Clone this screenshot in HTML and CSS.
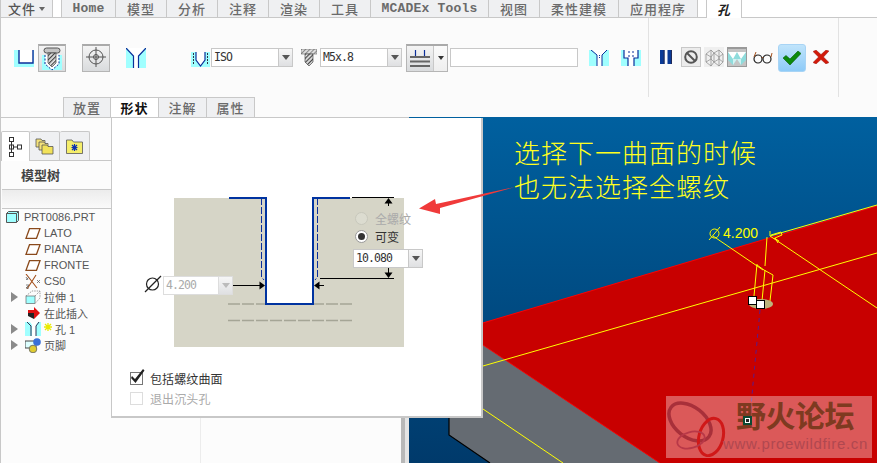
FILE: index.html
```html
<!DOCTYPE html>
<html lang="zh">
<head>
<meta charset="utf-8">
<title>孔</title>
<link rel="stylesheet" href="styles.css">
</head>
<body>
<svg class="defs" width="0" height="0">
  <defs>
    <pattern id="hatch" width="3" height="3" patternUnits="userSpaceOnUse" patternTransform="rotate(45)">
      <rect width="3" height="3" fill="#e4e4e4"/><rect width="1.200" height="3" fill="#444"/>
    </pattern>
    <pattern id="hatchLight" width="3" height="3" patternUnits="userSpaceOnUse" patternTransform="rotate(45)">
      <rect width="3" height="3" fill="#ddd"/><rect width="1" height="3" fill="#888"/>
    </pattern>
  </defs>
</svg>
<div class="app">
  <nav class="tabs">
    <div class="tab tab-file">文件 <span class="caret"></span></div>
    <div class="tab-gap"></div>
    <div class="tab tab-home mono">Home</div>
    <div class="tab">模型</div>
    <div class="tab">分析</div>
    <div class="tab">注释</div>
    <div class="tab">渲染</div>
    <div class="tab">工具</div>
    <div class="tab tab-wide mono">MCADEx Tools</div>
    <div class="tab">视图</div>
    <div class="tab tab-four">柔性建模</div>
    <div class="tab tab-four">应用程序</div>
    <div class="tab-gap2"></div>
    <div class="tab tab-active">孔</div>
    <div class="tab-rest"></div>
  </nav>

  <section class="ribbon">
    <div class="ribbon-row">
      <div class="group group-main">
        <svg class="ic ic-u" width="20" height="17" viewBox="0 0 20 17"><rect width="20" height="17" fill="#a0ffff"/><path d="M5 0V13H19V0Z" fill="#fff"/><path d="M5 0V13H19V0" fill="none" stroke="#0b2f9a" stroke-width="1.400"/></svg>
        <div class="tbtn tbtn-screw">
          <svg width="24" height="25" viewBox="0 0 24 25"><rect x="2" y="9" width="20" height="15" fill="#a0ffff"/><path d="M5 9V18L12 24 19 18V9" fill="#fff" stroke="#0b2f9a" stroke-dasharray="2 1.500"/><rect x="4" y="2" width="16" height="5" rx="2.500" fill="#c4c4c4" stroke="#555"/><path d="M8 7H16V17L12 21 8 17Z" fill="url(#hatch)" stroke="#444" stroke-width=".7"/></svg>
        </div>
        <div class="tbtn tbtn-cross">
          <svg width="24" height="24" viewBox="0 0 24 24" fill="none" stroke="#555"><circle cx="12" cy="11" r="7"/><circle cx="12" cy="11" r="2.500"/><path d="M12 1V21M2 11H22"/></svg>
        </div>
        <svg class="ic ic-y" width="20" height="20" viewBox="0 0 20 20"><rect width="20" height="20" fill="#a0ffff"/><path d="M1 0 7.500 8V20H12.500V8L19 0Z" fill="#fff"/><path d="M0 0 7.500 8V20M20 0 12.500 8V20" fill="none" stroke="#0b2f9a" stroke-width="1.200"/></svg>
        <svg class="ic ic-v" width="19" height="15" viewBox="0 0 19 15"><rect width="19" height="15" fill="#a0ffff"/><path d="M5 0V8L9.500 14 14 8V0Z" fill="#fff"/><path d="M5 0V8L9.500 14 14 8V0" fill="none" stroke="#0b2f9a" stroke-width="1.200"/><path d="M2.500 1V12M16.500 1V12" stroke="#334" stroke-dasharray="2 1"/></svg>
        <div class="combo combo-iso"><span class="combo-value">ISO</span><span class="combo-arrow"></span></div>
        <svg class="ic ic-bolt" width="16" height="17" viewBox="0 0 16 17"><rect width="16" height="5" fill="url(#hatchLight)" stroke="#666" stroke-width=".6"/><path d="M4 5H12V13L8 17 4 13Z" fill="url(#hatch)" stroke="#333" stroke-width=".6"/></svg>
        <div class="combo combo-thread"><span class="combo-value">M5x.8</span><span class="combo-arrow"></span></div>
        <div class="split">
          <div class="split-main">
            <svg width="20" height="17" viewBox="0 0 20 17"><path d="M5.500 0V6M14.500 0V6" stroke="#0b2f9a" stroke-width="1.200"/><path d="M0 7H20M0 11.500H20M0 16H20" stroke="#666" stroke-width="2"/></svg>
          </div>
          <div class="split-arrow"><span class="caret caret-dark"></span></div>
        </div>
        <div class="text-input"></div>
        <svg class="ic ic-flip1" width="20" height="16" viewBox="0 0 20 16"><rect width="20" height="16" fill="#a0ffff"/><path d="M3 0 8 5V16H13V5L18 0Z" fill="#fff"/><path d="M2 0 8 5V16M18 0 13 5V16" fill="none" stroke="#0b2f9a"/><path d="M10.500 5V9" stroke="#0b2f9a" stroke-dasharray="1 1"/></svg>
        <svg class="ic ic-flip2" width="20" height="16" viewBox="0 0 20 16"><rect width="20" height="16" fill="#a0ffff"/><path d="M3 0V8H7V16H13V8H17V0Z" fill="#fff"/><path d="M3 0V8H7V16M17 0V8H13V16" fill="none" stroke="#0b2f9a" stroke-width="1.200"/><path d="M8 1V7M12 1V7" stroke="#0b2f9a" stroke-dasharray="2 2"/></svg>
      </div>
      <div class="group group-actions">
        <svg class="ic ic-pause" width="12" height="14" viewBox="0 0 12 14"><path d="M0 0H4.500V14H0ZM7.500 0H12V14H7.500Z" fill="#0a3a96"/><path d="M4 0V14M11.500 0V14" stroke="#222a55"/></svg>
        <div class="sq sq-stop">
          <svg width="14" height="14" viewBox="0 0 14 14" fill="none" stroke="#555" stroke-width="2"><circle cx="7" cy="7" r="5.800"/><path d="M3 3 11 11"/></svg>
        </div>
        <div class="sq sq-plain">
          <svg width="20" height="20" viewBox="0 0 20 20" fill="none" stroke="#8a8a8a" stroke-width=".7"><path d="M2 7 7 3 10 6 15 3 19 7V15L15 19 10 15 7 19 2 15ZM7 3V12L2 15M7 12 10 15V6M15 3V12L19 15M15 12 10 15M7 19V10M15 19V10M2 7 7 10 10 6 15 10 19 7"/></svg>
        </div>
        <div class="sq sq-pressed">
          <svg width="18" height="16" viewBox="0 0 18 16"><path d="M0 2H18V10L13 15 9 9 5 15 0 10Z" fill="#8fdcdc"/><path d="M0 2 5 9 9 2 13 9 18 2Z" fill="#fff"/><path d="M5 15 5 9 9 9Z" fill="#d2f2f2"/><path d="M13 15 13 9 9 9Z" fill="#d2f2f2"/></svg>
        </div>
        <svg class="ic ic-glasses" width="20" height="13" viewBox="0 0 20 13" fill="none"><circle cx="5" cy="8" r="4" stroke="#222" stroke-width="1.200"/><circle cx="14" cy="8" r="4" stroke="#222" stroke-width="1.200"/><path d="M9 7Q9.500 5.500 10 7M1 6 3 1M18 6 19 2" stroke="#a4501c"/></svg>
        <div class="ok">
          <svg width="18" height="14" viewBox="0 0 18 14"><path d="M0 7 3 4.500 7 8 15 0 18 2.500 7 14Z" fill="#0c8a0c" stroke="#0a5a0a" stroke-width=".6"/></svg>
        </div>
        <svg class="ic ic-x" width="16" height="14" viewBox="0 0 16 14"><path d="M0 1.500 3 0 8 4.500 13 0 16 1 10.500 7 16 12.500 13 14 8 9.500 3 14 0 12.500 5.500 7Z" fill="#d21a0a" stroke="#901008" stroke-width=".4"/></svg>
      </div>
      <div class="group-end"></div>
    </div>
    <div class="subtabs">
      <div class="subtab">放置</div>
      <div class="subtab subtab-active">形状</div>
      <div class="subtab">注解</div>
      <div class="subtab">属性</div>
    </div>
  </section>

  <main class="workspace">
    <aside class="tree-pane">
      <div class="tree-tabs">
        <div class="tree-tab tree-tab-active">
          <svg width="13" height="20" viewBox="0 0 13 20" fill="#fff" stroke="#333"><rect x=".5" y=".5" width="4" height="4"/><rect x=".5" y="8" width="4" height="4"/><rect x=".5" y="15.500" width="4" height="4"/><rect x="8.500" y="8" width="4" height="4"/><path d="M2.500 4.500V15.500M4.500 10H8.500" fill="none"/></svg>
        </div>
        <div class="tree-tab">
          <svg width="19" height="18" viewBox="0 0 19 18" stroke="#555" stroke-width=".8"><path d="M1 2H6L7 3.500H10V10H1Z" fill="#f4e27a"/><path d="M4 5H9L10 6.500H13V13H4Z" fill="#f4e27a"/><path d="M7 8H12L13 9.500H18V17H7Z" fill="#f2e25a"/></svg>
        </div>
        <div class="tree-tab">
          <svg width="17" height="15" viewBox="0 0 17 15" stroke="#555" stroke-width=".8"><path d="M.5 1H6L7.500 3H16.500V14.500H.5Z" fill="#f5ee6a"/><path d="M8.500 5V12M5.500 8.500H11.500M6 6 11 11M11 6 6 11" stroke="#0b2fb0" stroke-width="1.200"/></svg>
        </div>
      </div>
      <h2 class="tree-title">模型树</h2>
      <div class="tree-search"></div>
      <ul class="tree">
        <li class="row row-root">
          <svg class="ico-root" width="13" height="12" viewBox="0 0 13 12"><path d="M.5 2.500 2.500 .5H12.500V9.500L10.500 11.500H.5Z" fill="#a0ffff" stroke="#555"/><path d="M.5 2.500H10.500V11.500M10.500 2.500 12.500 .5" fill="none" stroke="#555"/></svg>
          <span>PRT0086.PRT</span>
        </li>
        <li class="row"><span class="exp"></span><svg class="ico" width="16" height="11" viewBox="0 0 16 11"><path d="M4.500 .7H15L11.500 10.300H1Z" fill="#fff" stroke="#8a4a1c" stroke-width="1.300"/></svg><span>LATO</span></li>
        <li class="row"><span class="exp"></span><svg class="ico" width="16" height="11" viewBox="0 0 16 11"><path d="M4.500 .7H15L11.500 10.300H1Z" fill="#fff" stroke="#8a4a1c" stroke-width="1.300"/></svg><span>PIANTA</span></li>
        <li class="row"><span class="exp"></span><svg class="ico" width="16" height="11" viewBox="0 0 16 11"><path d="M4.500 .7H15L11.500 10.300H1Z" fill="#fff" stroke="#8a4a1c" stroke-width="1.300"/></svg><span>FRONTE</span></li>
        <li class="row"><span class="exp"></span><svg class="ico" width="16" height="15" viewBox="0 0 16 15" fill="none"><path d="M1 0 12 14M11 1 2 15" stroke="#a4501c" stroke-width="1.100"/><path d="M1 3 3 6M4 3 1 6M1 11 4 11 1 14H4M12 6 15 9M15 6 12 9" stroke="#666" stroke-width=".8"/></svg><span>CS0</span></li>
        <li class="row"><span class="exp exp-on"></span><svg class="ico" width="16" height="14" viewBox="0 0 16 14"><rect x="1" y="6" width="9" height="7.500" fill="#a0ffff" stroke="#666" stroke-width=".7"/><path d="M1 6 7 1H15V8L10 13.500M10 6 15 1" fill="none" stroke="#777" stroke-width=".7" stroke-dasharray="1.500 1"/></svg><span>拉伸 1</span></li>
        <li class="row"><span class="exp"></span><svg class="ico" width="16" height="14" viewBox="0 0 16 14"><path d="M3 4H9V1L15 7 9 13V10H3Z" fill="#e01010"/><path d="M3 7H9V13L3 10Z" fill="#222"/></svg><span>在此插入</span></li>
        <li class="row"><span class="exp exp-on"></span><svg class="ico ico-hole" width="16" height="14" viewBox="0 0 16 14"><rect width="16" height="14" fill="#a0ffff"/><path d="M5 0 7 3V14H11V3L13 0Z" fill="#fff"/><path d="M2 0 6 4V14M14 0 11 4V14" fill="none" stroke="#335"/></svg><svg class="star" width="8" height="8" viewBox="0 0 8 8"><path d="M4 0V8M0 4H8M1 1 7 7M7 1 1 7" stroke="#eaea00" stroke-width="1.300"/></svg><span>孔 1</span></li>
        <li class="row"><span class="exp exp-on"></span><svg class="ico" width="16" height="15" viewBox="0 0 16 15"><rect x="0" y="3" width="11" height="7" fill="#dff" stroke="#444"/><circle cx="12" cy="4" r="3.800" fill="#3a70d8"/><circle cx="8" cy="11" r="3.800" fill="#e0cc30" stroke="#776"/></svg><span>页脚</span></li>
      </ul>
      <div class="tree-divider"></div>
    </aside>
    <div class="sash"></div>
    <div class="sash-light"></div>
    <div class="viewport">
      <svg class="scene" width="468" height="346" viewBox="409 117 468 346">
        <defs>
          <linearGradient id="sky" x1="0" y1="0" x2="0" y2="1">
            <stop offset="0" stop-color="#00609f"/>
            <stop offset="1" stop-color="#003a6b"/>
          </linearGradient>
        </defs>
        <rect x="409" y="117" width="468" height="346" fill="url(#sky)"/>
        <path d="M449 320V435L490 463H660L449 322Z" fill="#656b72"/>
        <path d="M449 418V435L490 463" fill="none" stroke="#000" stroke-width="1.200"/>
        <path d="M449 333 877 206V463H660L449 322Z" fill="#c80000"/>
        <path d="M449 333 877 206M480 343 660 463" fill="none" stroke="#ff0000"/>
        <g fill="none" stroke="#ffff00">
          <path d="M483 366 877 253"/>
          <path d="M483 409 563 463"/>
          <path d="M770 236 877 205"/>
          <path d="M770 236 877 308"/>
          <path d="M713 236 763 270"/>
          <path d="M767 237 765 266"/>
          <path d="M757 264 754 296"/>
          <path d="M765 270 762 301"/>
          <path d="M773 275 770 301"/>
          <path d="M757 265 764 270 773 275"/>
          <path d="M771 235 781 232 782 235 775 238"/>
          <path d="M775 238 778 243M779 241 774 238"/>
          <path d="M770 236V231"/>
          <circle cx="714.500" cy="233.500" r="4.500"/>
          <path d="M709 240 720 227"/>
        </g>
        <ellipse cx="761" cy="304" rx="12" ry="5" fill="#bdb47c"/>
        <path d="M760 310 750 416" stroke="#5a1a8a" stroke-dasharray="4 4" fill="none"/>
        <rect x="748.500" y="296.500" width="8" height="8" fill="#fff" stroke="#000"/>
        <rect x="756.500" y="300.500" width="8" height="8" fill="#fff" stroke="#000"/>
        <text class="dim-text" x="723" y="238">4.200</text>
      </svg>
    </div>

    <section class="panel">
      <div class="diagram">
        <svg class="diagram-art" width="230" height="149" viewBox="174 198 230 149">
          <path d="M228 320.500H352M228 304H352" stroke="#a5a596" stroke-width="1.500" stroke-dasharray="12 2"/>
          <rect x="266" y="198" width="47" height="106" fill="#fff"/>
          <path d="M261.500 198V277L264 280M317.500 198V277L315 280" fill="none" stroke="#0b2f9a" stroke-dasharray="7 2"/>
          <path d="M229 198H266V304H313V198H350" fill="none" stroke="#0033a0" stroke-width="2"/>
          <g fill="none" stroke="#000">
            <path d="M352 197.500H394M320 278.500H394M388.500 199V206M388.500 268V277M233 285.500H262M316 285.500H324"/>
          </g>
          <path d="M388.500 198 384.500 203.500H392.500ZM388.500 278 384.500 272.500H392.500ZM265 285.500 259.500 281.500V289.500ZM314 285.500 319.500 281.500V289.500Z" fill="#000"/>
          <g fill="none" stroke="#222" stroke-width="1.200"><circle cx="152.500" cy="284" r="6"/><path d="M145 292 161 276"/></g>
        </svg>
        <div class="combo combo-small combo-diam combo-disabled"><span class="combo-value">4.200</span><span class="combo-arrow"></span></div>
        <label class="radio radio-full radio-disabled"><span class="radio-dot"></span>全螺纹</label>
        <label class="radio radio-var"><span class="radio-dot radio-dot-on"></span>可变</label>
        <div class="combo combo-small combo-depth"><span class="combo-value">10.080</span><span class="combo-arrow"></span></div>
      </div>
      <div class="checks">
        <label class="check">
          <span class="check-box"><svg width="16" height="15" viewBox="0 0 16 15"><path d="M2 7 5 10 13 0 14.500 1.500 5.500 14 1 9Z" fill="#222"/></svg></span>包括螺纹曲面
        </label>
        <label class="check check-disabled"><span class="check-box"></span>退出沉头孔</label>
      </div>
    </section>

    <svg class="callout-arrow" width="110" height="40" viewBox="415 180 110 40"><path d="M419 208.500 435 199 436 204 515 187 440 208 440 214Z" fill="#f03a3a"/></svg>
    <p class="callout">选择下一曲面的时候<br>也无法选择全螺纹</p>

    <div class="watermark">
      <svg class="wm-logo" width="64" height="58" viewBox="0 0 64 58" fill="none"><ellipse cx="23" cy="23" rx="24" ry="15" transform="rotate(38 23 23)" stroke="#a8303a" stroke-width="3.500"/><ellipse cx="44" cy="38" rx="12" ry="19" transform="rotate(15 44 38)" stroke="#d01818" stroke-width="3"/><ellipse cx="24" cy="41" rx="14" ry="8" transform="rotate(-15 24 41)" stroke="#b83848" stroke-width="1.800"/></svg>
      <div class="wm-text">
        <div class="wm-title">野火论坛</div>
        <div class="wm-url">www.proewildfire.cn</div>
      </div>
    </div>
    <div class="handle-mini"></div>
  </main>
</div>
</body>
</html>
```

FILE: styles.css
```css
* { box-sizing: border-box; }
html, body { margin: 0; padding: 0; }
body {
  width: 877px;
  height: 463px;
  overflow: hidden;
  background: #fcfcfc;
  font-family: "Liberation Sans", "Noto Sans CJK SC", sans-serif;
  color: #333;
}
.defs { position: absolute; }
.app { display: flex; flex-direction: column; height: 463px; border-left: 1px solid #c8c8c8; }

/* top tabs */
.tabs { display: flex; height: 18px; flex: none; }
.tab {
  width: 51px;
  height: 18px;
  display: flex;
  align-items: center;
  justify-content: center;
  gap: 3px;
  background: #eff0f2;
  border-right: 1px solid #c8c8c8;
  border-bottom: 1px solid #c8c8c8;
  font-family: "Noto Sans CJK SC", sans-serif;
  font-size: 13px;
  font-weight: 500;
  letter-spacing: 1px;
  color: #6a6a6a;
  white-space: nowrap;
}
.mono { font-family: "Liberation Mono", monospace; font-weight: 700; letter-spacing: .2px; }
.tab-file { width: 52px; color: #555; }
.tab-gap { width: 9px; border-right: 1px solid #c8c8c8; border-bottom: 1px solid #c8c8c8; background: #fff; }
.tab-home { width: 54px; }
.tab-wide { width: 118px; }
.tab-four { width: 79px; }
.tab-gap2 { width: 9px; border-bottom: 1px solid #c8c8c8; border-right: 1px solid #c8c8c8; background: #fff; }
.tab-active {
  width: 35px;
  background: #fff;
  border-bottom: 0;
  color: #222;
  font-weight: 700;
  font-style: italic;
}
.tab-rest { flex: 1; border-bottom: 1px solid #c8c8c8; background: #fff; }
.caret {
  display: inline-block;
  border: 3.500px solid transparent;
  border-top: 4px solid #666;
  border-bottom: 0;
}
.caret-dark { border-top-color: #333; }

/* ribbon */
.ribbon { flex: none; height: 100px; background: #fbfbfb; border-bottom: 1px solid #c8c8c8; display: flex; flex-direction: column; }
.ribbon-row { display: flex; height: 79px; flex: none; }
.group { display: flex; align-items: center; height: 79px; }
.group-main { width: 648px; border-right: 1px solid #e2e2e2; padding-left: 13px; }
.group-actions { width: 190px; border-right: 1px solid #e2e2e2; padding-left: 11px; }
.group-end { flex: 1; }
.ic { display: block; flex: none; }

.ic-u { margin-top: 1px; }
.tbtn {
  width: 28px;
  height: 28px;
  flex: none;
  display: flex;
  align-items: center;
  justify-content: center;
  border: 1px solid #b5b5b5;
  border-top: 2px solid #aaa;
  background: linear-gradient(#f4f4f4, #d9dbdd);
}
.tbtn-screw { margin-left: 4px; }
.tbtn-cross { margin-left: 16px; }
.ic-y { margin-left: 16px; }
.ic-v { margin-left: 45px; margin-top: 4px; }

.combo {
  display: flex;
  width: 82px;
  height: 19px;
  flex: none;
  background: #fff;
  border: 1px solid #c8c8c8;
  font-family: "DejaVu Sans Mono", "Liberation Mono", monospace;
  font-size: 11.500px;
  color: #333;
}
.combo-value { flex: 1; padding-left: 2px; line-height: 17px; letter-spacing: -.9px; }
.combo-arrow {
  width: 14px;
  flex: none;
  display: flex;
  align-items: center;
  justify-content: center;
  background: linear-gradient(#f6f6f6, #dfe0e2);
  border-left: 1px solid #c8c8c8;
}
.combo-arrow::after {
  content: "";
  border: 4px solid transparent;
  border-top: 5px solid #555;
  border-bottom: 0;
}
.combo-iso { margin-left: 1px; margin-top: -1px; }
.ic-bolt { margin-left: 8px; margin-top: -1px; }
.combo-thread { margin-left: 3px; margin-top: -1px; }

.split { display: flex; height: 28px; width: 42px; margin-left: 4px; flex: none; border: 1px solid #b5b5b5; border-top: 2px solid #aaa; background: linear-gradient(#f4f4f4, #d9dbdd); }
.split-main { width: 27px; display: flex; align-items: center; justify-content: center; border-right: 1px solid #c8c8c8; }
.split-arrow { flex: 1; display: flex; align-items: center; justify-content: center; background: linear-gradient(#fbfbfb, #eee); }
.text-input { width: 128px; height: 19px; margin-left: 2px; margin-top: -1px; background: #fff; border: 1px solid #c8c8c8; flex: none; }
.ic-flip1 { margin-left: 11px; margin-top: 1px; }
.ic-flip2 { margin-left: 12px; margin-top: 1px; }

.ic-pause { margin-top: -1px; }
.sq { width: 20px; height: 20px; flex: none; display: flex; align-items: center; justify-content: center; margin-top: -1px; }
.sq-stop { margin-left: 9px; background: #ececec; border: 1px solid #c8c8c8; }
.sq-plain { margin-left: 3px; background: #efefef; }
.sq-pressed { margin-left: 3px; background: #c4c4c4; border: 1px solid #9a9a9a; border-top-width: 2px; }
.ic-glasses { margin-left: 6px; margin-top: -1px; }
.ok {
  width: 28px;
  height: 28px;
  flex: none;
  margin-left: 5px;
  display: flex;
  align-items: center;
  justify-content: center;
  border-radius: 3px;
  background: linear-gradient(#c0e4fb, #8ecbf8);
  border: 1px solid #a8d4f5;
}
.ic-x { margin-left: 7px; margin-top: -1px; }

.subtabs { display: flex; padding-left: 62px; height: 20px; }
.subtab {
  width: 48px;
  height: 20px;
  display: flex;
  align-items: center;
  justify-content: center;
  background: #eff0f2;
  border: 1px solid #c8c8c8;
  border-bottom: 0;
  border-left: 0;
  font-family: "Noto Sans CJK SC", sans-serif;
  font-size: 13px;
  font-weight: 500;
  letter-spacing: 1px;
  color: #6a6a6a;
}
.subtab:first-child { border-left: 1px solid #c8c8c8; }
.subtab-active { background: #fff; color: #111; font-weight: 700; position: relative; }

/* workspace */
.workspace { flex: 1; display: flex; position: relative; min-height: 0; }
.tree-pane { width: 400px; flex: none; background: #fcfcfc; position: relative; }
.sash { width: 4px; background: #b8b8b8; flex: none; }
.sash-light { width: 4px; background: #e4e4e4; flex: none; }
.viewport { flex: 1; min-width: 0; background: #00609f; overflow: hidden; margin-top: -1px; position: relative; }
.scene { display: block; }
.dim-text { font-family: "Liberation Sans", sans-serif; font-size: 14px; fill: #ffff00; }

.tree-tabs { display: flex; padding-top: 13px; height: 43px; border-bottom: 1px solid #c8c8c8; }
.tree-tab {
  width: 30px;
  height: 29px;
  display: flex;
  align-items: center;
  justify-content: center;
  background: #eff0f2;
  border: 1px solid #c8c8c8;
  border-left: 0;
  border-bottom: 0;
  border-radius: 2px 2px 0 0;
}
.tree-tab-active { width: 29px; height: 30px; background: #fff; border-left: 1px solid #c8c8c8; position: relative; z-index: 1; }
.tree-title {
  margin: 0;
  height: 28px;
  padding-left: 20px;
  line-height: 28px;
  font-family: "Noto Sans CJK SC", sans-serif;
  font-size: 13px;
  font-weight: 700;
  color: #444;
}
.tree-search {
  height: 20px;
  margin-left: 1px;
  width: 110px;
  border-top: 1px solid #c8c8c8;
  border-bottom: 1px solid #c8c8c8;
  background: linear-gradient(#ececec, #fafafa);
}
.tree { list-style: none; margin: 0; padding: 0; }
.row {
  height: 16px;
  display: flex;
  align-items: center;
  padding-left: 10px;
  font-size: 11px;
  color: #555;
  white-space: nowrap;
}
.row-root { padding-left: 5px; }
.ico-root { margin-right: 5px; flex: none; }
.exp { width: 14px; flex: none; display: block; }
.exp-on { width: 7px; height: 0; margin-right: 7px; border: 5px solid transparent; border-left: 7px solid #8a8a8a; border-right: 0; }
.ico { flex: none; margin-right: 3px; }
.ico-hole { margin-right: 3px; }
.star { flex: none; margin-right: 3px; margin-top: -4px; }
.tree-divider { position: absolute; left: 199px; bottom: 0; height: 45px; width: 1px; background: #ececec; }

/* floating panel */
.panel {
  position: absolute;
  left: 110px;
  top: 0;
  width: 372px;
  height: 300px;
  background: #fff;
  border: 1px solid #c8c8c8;
  border-top: 0;
  border-right-width: 2px;
  border-bottom-width: 2px;
}
.diagram { position: relative; width: 230px; height: 149px; margin: 80px 0 0 62px; background: #d6d5c7; }
.diagram-art { position: absolute; left: 0; top: 0; overflow: visible; }
.combo-small { position: absolute; width: 70px; }
.combo-diam { left: -11px; top: 78px; }
.combo-depth { left: 179px; top: 51px; }
.combo-disabled { color: #aaa; border-color: #ddd; }
.combo-disabled .combo-arrow { border-left-color: #ddd; }
.combo-disabled .combo-arrow::after { border-top-color: #bbb; }
.radio {
  position: absolute;
  left: 181px;
  display: flex;
  align-items: center;
  gap: 7px;
  font-size: 12px;
  color: #333;
  white-space: nowrap;
}
.radio-full { top: 12px; color: #aaa; }
.radio-var { top: 30px; }
.radio-dot { width: 13px; height: 13px; border-radius: 50%; background: #eeeee8; border: 1px solid #999; display: flex; align-items: center; justify-content: center; }
.radio-disabled .radio-dot { background: #dcdcd0; border-color: #c8c8bc; }
.radio-dot-on { background: #fff; }
.radio-dot-on::after { content: ""; width: 7px; height: 7px; border-radius: 50%; background: #333; }

.checks { margin: 24px 0 0 18px; display: flex; flex-direction: column; gap: 6px; }
.check { display: flex; align-items: center; gap: 7px; height: 14px; font-size: 12px; color: #333; letter-spacing: .1px; }
.check-box { position: relative; width: 13px; height: 13px; flex: none; border: 1px solid #777; background: #fff; }
.check-box svg { position: absolute; left: -1px; top: -4px; }
.check-disabled { color: #aaa; }
.check-disabled .check-box { border-color: #ddd; }

/* annotation over the screenshot */
.callout {
  position: absolute;
  left: 513px;
  top: 17px;
  margin: 0;
  font-family: "Noto Sans CJK SC", sans-serif;
  font-weight: 300;
  font-size: 26px;
  line-height: 34px;
  letter-spacing: 1px;
  color: #ffff20;
  white-space: nowrap;
}
.callout-arrow { position: absolute; left: 414px; top: 62px; }

.watermark {
  position: absolute;
  left: 665px;
  top: 278px;
  width: 206px;
  height: 62px;
  display: flex;
  background: rgba(255, 255, 255, .35);
}
.wm-logo { flex: none; margin: 3px 0 0 1px; }
.wm-text { flex: 1; }
.wm-title {
  font-family: "Noto Sans CJK SC", sans-serif;
  font-size: 30px;
  line-height: 36px;
  font-weight: 700;
  color: #7e3a20;
  margin-left: 5px;
  letter-spacing: -.5px;
  white-space: nowrap;
}
.wm-url {
  font-size: 15px;
  line-height: 20px;
  margin-left: -8px;
  margin-top: 2px;
  color: #b04850;
  white-space: nowrap;
  letter-spacing: .65px;
}
.handle-mini {
  position: absolute;
  left: 742px;
  top: 298px;
  width: 9px;
  height: 9px;
  background: #fff;
  border: 2px solid #0d4a33;
  box-shadow: inset 0 0 0 1px #fff, inset 0 0 0 3px #222;
}
```
